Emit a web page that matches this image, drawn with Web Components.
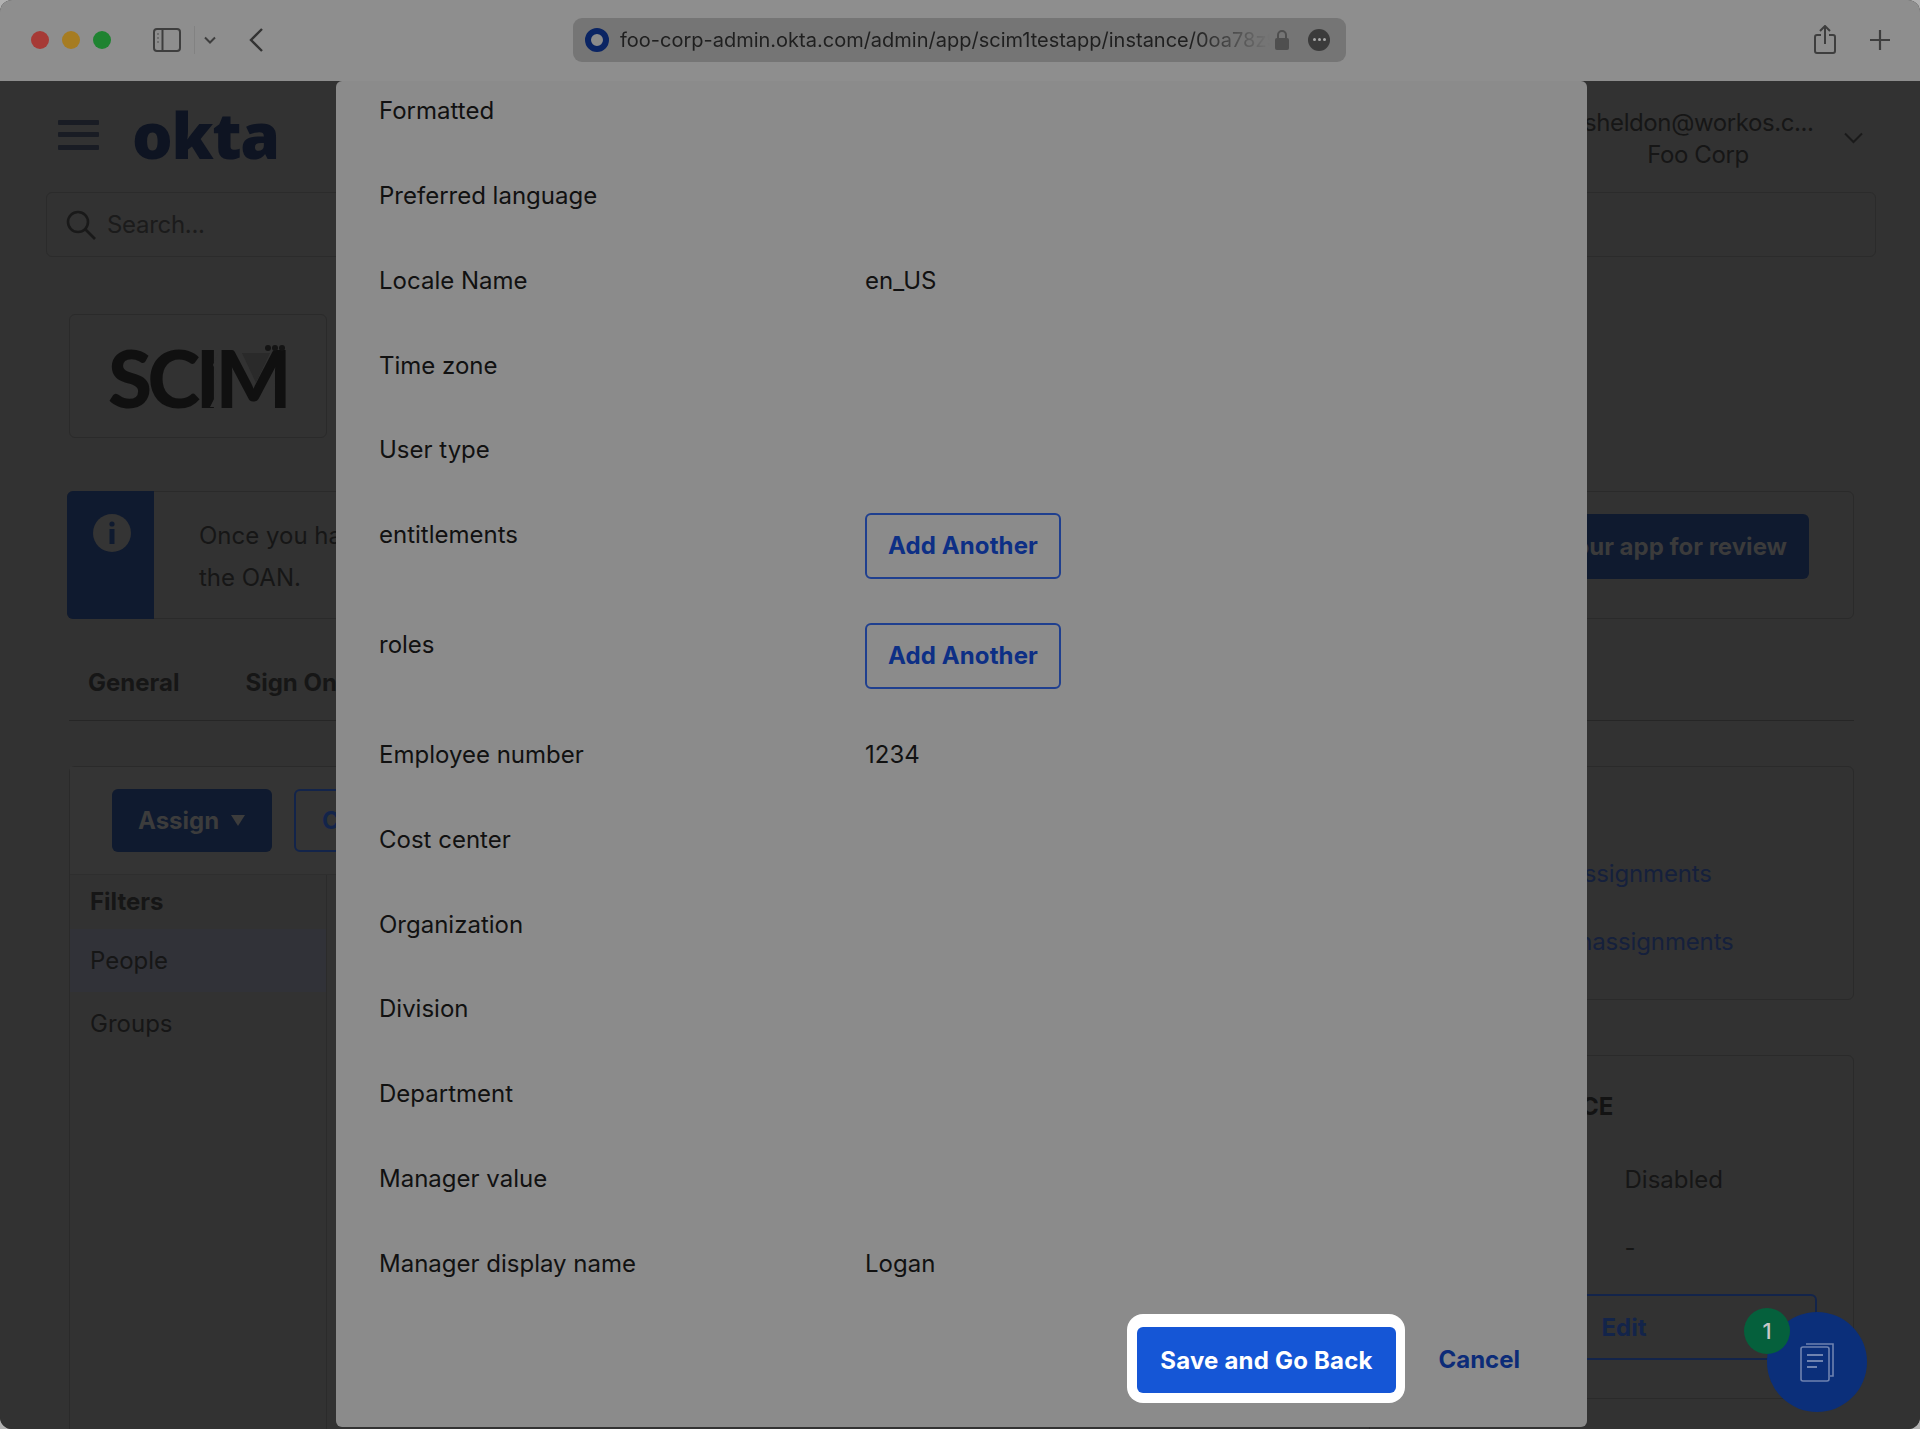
<!DOCTYPE html>
<html lang="en">
<head>
<meta charset="utf-8">
<title>Okta admin</title>
<style>
  html, body { margin: 0; background: #b2b2b2; }
  body { font-family: Inter, "Liberation Sans", sans-serif; font-size: 24px; }
</style>
</head>
<body>
<browser-window>
  <title-bar slot="bar" url="foo-corp-admin.okta.com/admin/app/scim1testapp/instance/0oa78z9"></title-bar>

  <okta-page>
    <okta-header></okta-header>
    <search-box></search-box>
    <app-card></app-card>
    <notice-box>
      <span>Once you have<br>the OAN.</span>
      <dark-button slot="action" solid>Submit your app for review</dark-button>
    </notice-box>
    <tab-bar></tab-bar>
    <assign-layout>
      <assign-panel slot="left"></assign-panel>
      <side-panel slot="right">
        <report-links></report-links>
      </side-panel>
      <side-panel slot="right" class="service">
        <self-service></self-service>
      </side-panel>
    </assign-layout>

    <modal-dialog slot="overlay">
      <form-row label="Formatted"></form-row>
      <form-row label="Preferred language"></form-row>
      <form-row label="Locale Name">en_US</form-row>
      <form-row label="Time zone"></form-row>
      <form-row label="User type"></form-row>
      <form-row label="entitlements"><add-button>Add Another</add-button></form-row>
      <form-row label="roles"><add-button>Add Another</add-button></form-row>
      <form-row label="Employee number">1234</form-row>
      <form-row label="Cost center"></form-row>
      <form-row label="Organization"></form-row>
      <form-row label="Division"></form-row>
      <form-row label="Department"></form-row>
      <form-row label="Manager value"></form-row>
      <form-row label="Manager display name">Logan</form-row>
      <modal-footer slot="footer"></modal-footer>
    </modal-dialog>

    <help-fab slot="overlay"></help-fab>
  </okta-page>
</browser-window>

<script>
// small helper so every element below stays a plain class with its own shadow root
class Base extends HTMLElement {
  constructor() {
    super();
    this.attachShadow({ mode: 'open' });
  }
  connectedCallback() {
    this.shadowRoot.innerHTML = this.markup();
  }
}

class BrowserWindow extends Base {
  markup() {
    return `
      <style>
        :host { display: flex; flex-direction: column; height: 1429px; border-radius: 12px; overflow: hidden; background: #323232; }
      </style>
      <slot name="bar"></slot>
      <slot></slot>`;
  }
}

class TitleBar extends Base {
  markup() {
    return `
      <style>
        :host { display: flex; align-items: center; height: 81px; flex: none; background: #8e8e8e; position: relative; }
        .lights { display: flex; gap: 13px; margin-left: 31px; margin-top: -2px; }
        .lights i { width: 18px; height: 18px; border-radius: 50%; display: block; }
        .side { margin-left: 42px; display: block; margin-top: -2px; }
        .sep { width: 1px; height: 28px; background: #828282; margin-left: 13px; margin-top: -2px; }
        .drop { margin-left: 9px; display: block; margin-top: -2px; }
        .back { margin-left: 33px; display: block; margin-top: -2px; }
        .url { display: flex; align-items: center; width: 773px; height: 44px; margin-left: 310px; margin-top: -2px; background: #757575; border-radius: 9px; flex: none; }
        .fav { width: 24px; height: 24px; border-radius: 50%; border: 6px solid #0a2463; box-sizing: border-box; margin-left: 12px; background: #8a8a8a; flex: none; }
        .text { width: 650px; margin-left: 11px; overflow: hidden; white-space: nowrap; font-size: 20px; color: #1f1f1f; flex: none;
                -webkit-mask-image: linear-gradient(90deg, #000 88%, transparent 100%); mask-image: linear-gradient(90deg, #000 88%, transparent 100%); }
        .lock { margin-left: 4px; display: block; }
        .more { width: 22px; height: 22px; border-radius: 50%; background: #3b3b3b; margin-left: 18px; display: flex; align-items: center; justify-content: center; gap: 2px; }
        .more b { width: 3px; height: 3px; background: #a8a8a8; border-radius: 50%; }
        .right { margin-left: auto; display: flex; align-items: center; gap: 34px; margin-right: 30px; margin-top: -2px; }
      </style>
      <div class="lights">
        <i style="background:#a63a36"></i><i style="background:#a67c22"></i><i style="background:#1f8331"></i>
      </div>
      <svg class="side" width="28" height="24" viewBox="0 0 28 24" fill="none" stroke="#3e3e3e" stroke-width="2">
        <rect x="1" y="1" width="26" height="22" rx="3"/>
        <path d="M9.5 1v22"/>
        <path d="M4.5 6h1M4.5 10h1M4.5 14h1" stroke-width="1.5"/>
      </svg>
      <div class="sep"></div>
      <svg class="drop" width="12" height="8" viewBox="0 0 12 8" fill="none" stroke="#3e3e3e" stroke-width="2">
        <path d="M1 1.5l5 5 5-5"/>
      </svg>
      <svg class="back" width="14" height="24" viewBox="0 0 14 24" fill="none" stroke="#333" stroke-width="2.4">
        <path d="M13 1L2 12l11 11"/>
      </svg>
      <div class="url">
        <div class="fav"></div>
        <div class="text">${this.getAttribute('url')}</div>
        <svg class="lock" width="16" height="22" viewBox="0 0 16 22">
          <path d="M4 10V6a4 4 0 0 1 8 0v4" fill="none" stroke="#4f4f4f" stroke-width="2"/>
          <rect x="1" y="9" width="14" height="12" rx="2" fill="#4f4f4f"/>
        </svg>
        <div class="more"><b></b><b></b><b></b></div>
      </div>
      <div class="right">
        <svg width="22" height="30" viewBox="0 0 22 30" fill="none" stroke="#3e3e3e" stroke-width="2">
          <path d="M7 10H3a2 2 0 0 0-2 2v14a2 2 0 0 0 2 2h16a2 2 0 0 0 2-2V12a2 2 0 0 0-2-2h-4"/>
          <path d="M11 19V2M6 6l5-5 5 5"/>
        </svg>
        <svg width="20" height="20" viewBox="0 0 20 20" fill="none" stroke="#3e3e3e" stroke-width="2.2">
          <path d="M10 0v20M0 10h20"/>
        </svg>
      </div>`;
  }
}

class OktaPage extends Base {
  markup() {
    return `
      <style>
        :host { display: flex; flex-direction: column; flex: 1; min-height: 0; position: relative; overflow: hidden; background: #323232; color: #161616; }
      </style>
      <slot></slot>
      <slot name="overlay"></slot>`;
  }
}

class OktaHeader extends Base {
  markup() {
    return `
      <style>
        :host { display: flex; align-items: center; height: 111px; flex: none; position: relative; }
        .burger { display: flex; flex-direction: column; gap: 7.5px; margin-left: 58px; width: 41px; margin-top: -4px; }
        .burger i { display: block; height: 5px; background: #191c24; border-radius: 1px; }
        .logo { margin-left: 33px; font-family: "Open Sans", sans-serif; font-weight: 800; font-size: 64px; line-height: 60px; letter-spacing: -1.4px; color: #0e1422; margin-top: -3px; }
        .user { margin-left: auto; width: 228px; margin-right: 108px; text-align: center; font-size: 24px; letter-spacing: -0.4px; line-height: 32px; color: #161616; white-space: nowrap; margin-top: 5px; }
        .chev { position: absolute; left: 1844px; top: 51px; }
      </style>
      <div class="burger"><i></i><i></i><i></i></div>
      <div class="logo">okta</div>
      <div class="user">sheldon@workos.c...<br>Foo Corp</div>
      <svg class="chev" width="19" height="12" viewBox="0 0 19 12" fill="none" stroke="#1a1a1a" stroke-width="2">
        <path d="M1 1.5l8.5 8.5L18 1.5"/>
      </svg>`;
  }
}

class SearchBox extends Base {
  markup() {
    return `
      <style>
        :host { display: flex; align-items: center; height: 65px; box-sizing: border-box; margin: 0 44px 0 46px; border: 1px solid #2b2b2b; border-radius: 6px; flex: none; }
        svg { margin-left: 19px; display: block; }
        span { margin-left: 11px; color: #1b1b1b; font-size: 24px; letter-spacing: -0.3px; }
      </style>
      <svg width="30" height="30" viewBox="0 0 30 30" fill="none" stroke="#191919" stroke-width="2.6">
        <circle cx="12" cy="12" r="10"/>
        <path d="M19 19l10 10"/>
      </svg>
      <span>Search...</span>`;
  }
}

class AppCard extends Base {
  markup() {
    return `
      <style>
        :host { display: block; position: relative; width: 258px; height: 124px; box-sizing: border-box; margin: 57px 0 0 69px; border: 1px solid #2a2a2a; border-radius: 6px; flex: none; }
        .name { position: absolute; left: 38px; top: 22px; font-family: Lato, sans-serif; font-weight: 900; font-size: 80px; line-height: 80px; letter-spacing: -4.5px; color: #101010; }
        svg { position: absolute; left: 130px; top: 30px; }
      </style>
      <div class="name">SCIM</div>
      <svg width="90" height="70" viewBox="0 0 90 70">
        <path d="M18 8l-5 12 4 8-3 4 3 4-3 6 2 8-6 12h10V8z" fill="#323232"/>
        <path d="M42 8h28l-14 30z" fill="#2a2a2a"/>
        <circle cx="75" cy="3" r="3" fill="#141414"/><circle cx="82" cy="3" r="3" fill="#141414"/><circle cx="68" cy="3" r="3" fill="#141414"/>
      </svg>`;
  }
}

class NoticeBox extends Base {
  markup() {
    return `
      <style>
        :host { display: flex; height: 128px; box-sizing: border-box; margin: 53px 66px 0 67px; border: 1px solid #2a2a2a; border-radius: 6px; flex: none; }
        .side { width: 87px; margin: -1px 0 -1px -1px; background: #0f1a2f; border-radius: 6px 0 0 6px; flex: none; display: flex; justify-content: center; padding: 23px 0 0 2px; box-sizing: border-box; }
        .side svg { display: block; }
        .msg { margin-left: 45px; padding-top: 23px; line-height: 42px; font-size: 24px; color: #161616; }
        .act { margin-left: auto; margin-right: 44px; margin-top: 22px; }
      </style>
      <div class="side">
        <svg width="38" height="38" viewBox="0 0 38 38">
          <circle cx="19" cy="19" r="19" fill="#343434"/>
          <circle cx="19" cy="10" r="2.6" fill="#0f1a2f"/>
          <rect x="16.5" y="15" width="5" height="15" fill="#0f1a2f"/>
        </svg>
      </div>
      <div class="msg"><slot></slot></div>
      <div class="act"><slot name="action"></slot></div>`;
  }
}

class DarkButton extends Base {
  markup() {
    return `
      <style>
        :host { display: inline-flex; align-items: center; height: 65px; box-sizing: border-box; padding: 0 22px; background: #0f1a2f; border-radius: 6px; color: #3b3b3b; font-weight: 700; font-size: 24px; white-space: nowrap; }
      </style>
      <slot></slot>`;
  }
}

class TabBar extends Base {
  markup() {
    return `
      <style>
        :host { display: flex; gap: 66px; height: 64px; box-sizing: border-box; margin: 38px 66px 0 69px; padding-left: 19px; border-bottom: 1px solid #262626; font-weight: 700; font-size: 24px; color: #161616; flex: none; align-items: flex-start; }
        span { line-height: 52px; }
      </style>
      <span>General</span><span>Sign On</span>`;
  }
}

class AssignLayout extends Base {
  markup() {
    return `
      <style>
        :host { display: flex; gap: 30px; margin: 45px 66px 0 69px; flex: none; align-items: flex-start; }
        .l { flex: 1; min-width: 0; }
        .r { width: 454px; flex: none; display: flex; flex-direction: column; gap: 55px; }
      </style>
      <div class="l"><slot name="left"></slot></div>
      <div class="r"><slot name="right"></slot></div>`;
  }
}

class AssignPanel extends Base {
  markup() {
    return `
      <style>
        :host { display: block; height: 800px; border: 1px solid #2a2a2a; border-radius: 6px; box-sizing: border-box; font-size: 24px; color: #161616; }
        .tools { display: flex; gap: 22px; height: 108px; box-sizing: border-box; padding: 22px 0 0 42px; background: #343434; border-bottom: 1px solid #2e2e2e; }
        .btn { height: 63px; box-sizing: border-box; border-radius: 6px; display: flex; align-items: center; font-weight: 700; }
        .assign { width: 160px; padding-left: 26px; background: #0f1a2f; color: #3c3c3c; gap: 12px; }
        .assign i { border: 7px solid transparent; border-top: 11px solid #3c3c3c; border-bottom: 0; }
        .convert { padding: 0 26px; border: 2px solid #13244a; color: #13244a; }
        .body { display: grid; grid-template-columns: 257px 1fr; height: 100%; }
        .filters { border-right: 1px solid #2b2b2b; }
        .head { height: 54px; padding-left: 20px; line-height: 54px; font-weight: 700; }
        .item { height: 63px; padding-left: 20px; line-height: 63px; }
        .sel { background: #313238; }
      </style>
      <div class="tools">
        <div class="btn assign">Assign <i></i></div>
        <div class="btn convert">Convert assignments</div>
      </div>
      <div class="body">
        <div class="filters">
          <div class="head">Filters</div>
          <div class="item sel">People</div>
          <div class="item">Groups</div>
        </div>
        <div></div>
      </div>`;
  }
}

class SidePanel extends Base {
  markup() {
    return `
      <style>
        :host { display: block; border: 1px solid #2a2a2a; border-radius: 6px; box-sizing: border-box; }
        :host(.service) { height: 344px; }
      </style>
      <slot></slot>`;
  }
}

class ReportLinks extends Base {
  markup() {
    return `
      <style>
        :host { display: flex; flex-direction: column; height: 232px; box-sizing: border-box; padding: 92px 0 0 75px; gap: 38px; color: #15203c; font-size: 24px; letter-spacing: -0.15px; line-height: 30px; white-space: nowrap; }
      </style>
      <span>Current Assignments</span>
      <span>Recent Unassignments</span>`;
  }
}

class SelfService extends Base {
  markup() {
    return `
      <style>
        :host { display: block; position: relative; height: 100%; padding: 36px 0 0 46px; box-sizing: border-box; font-size: 24px; color: #161616; }
        .title { font-weight: 700; line-height: 30px; white-space: nowrap; color: #131313; }
        .val { margin-left: 177.5px; line-height: 30px; }
        .edit { margin: 31px 36px 0 -10px; height: 66px; box-sizing: border-box; padding-right: 6px; border: 2px solid #13244a; border-radius: 6px; display: flex; align-items: center; justify-content: center; color: #13244a; font-weight: 700; }
      </style>
      <div class="title">SELF SERVICE</div>
      <div class="val" style="margin-top:43px">Disabled</div>
      <div class="val" style="margin-top:38px">-</div>
      <div class="edit">Edit</div>`;
  }
}

class ModalDialog extends Base {
  markup() {
    return `
      <style>
        :host { position: absolute; left: 336px; top: 0; width: 1251px; bottom: 2px; display: flex; flex-direction: column; box-sizing: border-box; padding: 15px 0 0 43px; background: #8b8b8b; border-radius: 6px; color: #111; }
        .rows { display: flex; flex-direction: column; gap: 54.85px; }
        .foot { margin-top: auto; }
      </style>
      <div class="rows"><slot></slot></div>
      <div class="foot"><slot name="footer"></slot></div>`;
  }
}

class FormRow extends Base {
  markup() {
    return `
      <style>
        :host { display: grid; grid-template-columns: 486px 1fr; line-height: 30px; font-size: 24px; min-height: 30px; color: #111; }
      </style>
      <div>${this.getAttribute('label')}</div>
      <div><slot></slot></div>`;
  }
}

class AddButton extends Base {
  markup() {
    return `
      <style>
        :host { display: flex; align-items: center; justify-content: center; width: 196px; height: 66px; box-sizing: border-box; margin: -7px 0 -4px 0; border: 2px solid #1f3f8f; border-radius: 6px; color: #0d2f85; font-weight: 700; font-size: 24px; letter-spacing: 0.1px; }
      </style>
      <slot></slot>`;
  }
}

class ModalFooter extends Base {
  markup() {
    return `
      <style>
        :host { display: flex; justify-content: flex-end; align-items: center; padding: 0 67px 24px 0; font-weight: 700; font-size: 24px; }
        .ring { padding: 13px 9px 10px 10px; background: #fff; border-radius: 16px; }
        .save { display: flex; align-items: center; justify-content: center; width: 259px; height: 66px; background: #1556d6; border-radius: 6px; color: #fff; letter-spacing: 0.2px; }
        .cancel { margin-left: 33.5px; padding-top: 2px; color: #0c2b78; }
      </style>
      <div class="ring"><div class="save">Save and Go Back</div></div>
      <div class="cancel">Cancel</div>`;
  }
}

class HelpFab extends Base {
  markup() {
    return `
      <style>
        :host { position: absolute; left: 1767px; top: 1231px; width: 100px; height: 100px; border-radius: 50%; background: #0b2f7a; display: flex; align-items: center; justify-content: center; }
        .badge { position: absolute; left: -23px; top: -4px; width: 46px; height: 46px; border-radius: 50%; background: #05603c; color: #c8c8c8; display: flex; align-items: center; justify-content: center; font-size: 22px; font-weight: 500; }
        svg { display: block; }
      </style>
      <svg width="36" height="40" viewBox="0 0 36 40" fill="none" stroke="#6f83b0" stroke-width="1.6">
        <path d="M7 2h27v32h-3"/>
        <rect x="2" y="5" width="28" height="34" rx="2"/>
        <path d="M8 13h16M8 19h16M8 25h10" stroke-width="2"/>
      </svg>
      <div class="badge">1</div>`;
  }
}

customElements.define('browser-window', BrowserWindow);
customElements.define('title-bar', TitleBar);
customElements.define('okta-page', OktaPage);
customElements.define('okta-header', OktaHeader);
customElements.define('search-box', SearchBox);
customElements.define('app-card', AppCard);
customElements.define('notice-box', NoticeBox);
customElements.define('dark-button', DarkButton);
customElements.define('tab-bar', TabBar);
customElements.define('assign-layout', AssignLayout);
customElements.define('assign-panel', AssignPanel);
customElements.define('side-panel', SidePanel);
customElements.define('report-links', ReportLinks);
customElements.define('self-service', SelfService);
customElements.define('modal-dialog', ModalDialog);
customElements.define('form-row', FormRow);
customElements.define('add-button', AddButton);
customElements.define('modal-footer', ModalFooter);
customElements.define('help-fab', HelpFab);
</script>
</body>
</html>
